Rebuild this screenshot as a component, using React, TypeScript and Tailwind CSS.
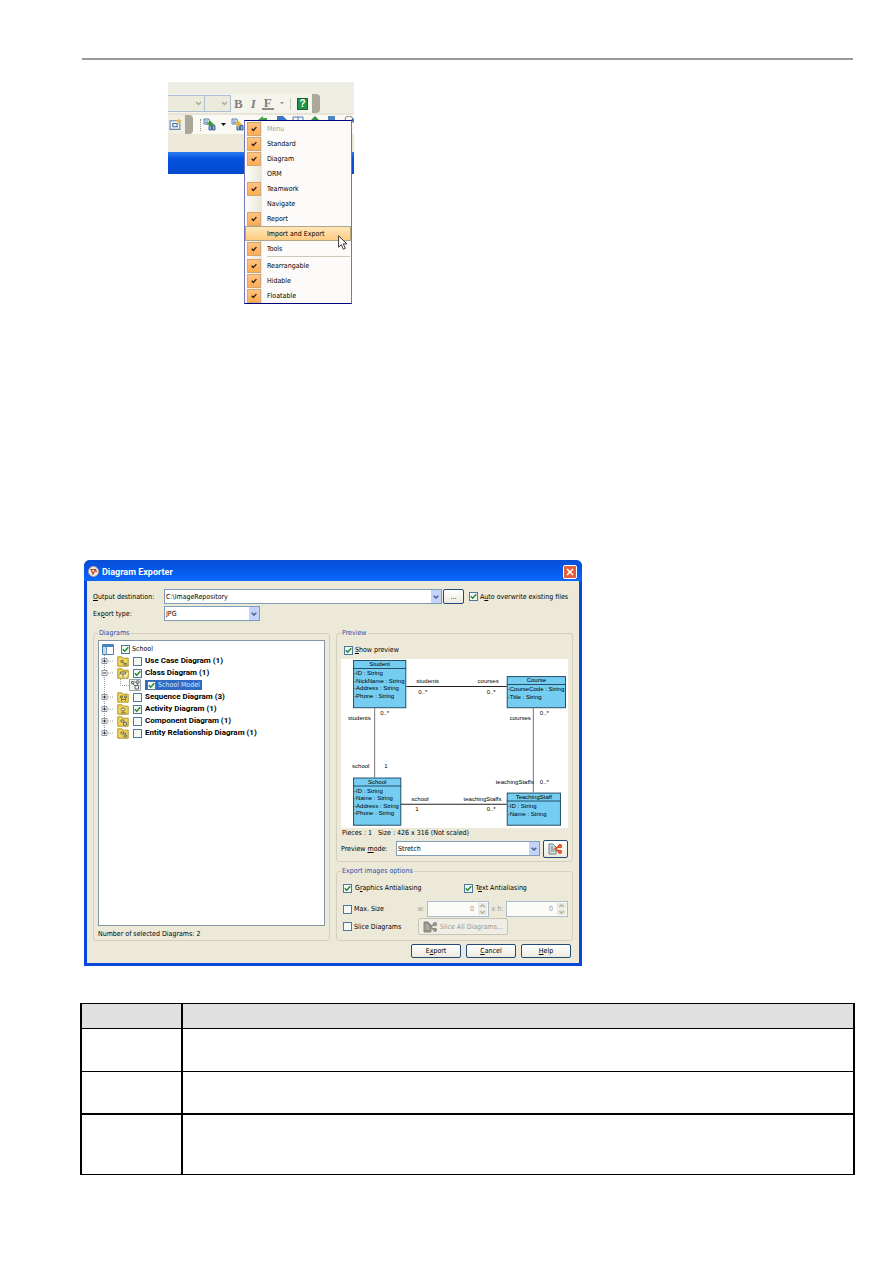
import React from "react";

const ui = "font-['DejaVu_Sans_Condensed','DejaVu_Sans',sans-serif] text-[7px] leading-[10px]";

function Tick({ className = "" }: { className?: string }) {
  return (
    <svg viewBox="0 0 7 7" className={className} fill="none" stroke="currentColor" strokeWidth="1.5">
      <path d="M.8 3.2 2.7 5.2 6.3 1.3" />
    </svg>
  );
}

function Check({ label, on = false, bold = false, selected = false, gap = "gap-0.5" }: {
  label: React.ReactNode; on?: boolean; bold?: boolean; selected?: boolean; gap?: string;
}) {
  return (
    <label className={`flex items-center whitespace-nowrap ${gap} ${bold ? "font-[Roboto,sans-serif] text-[8px] font-bold" : ""} ${selected ? "bg-[#316ac5] px-0.5 text-[#dce8fa]" : ""}`}>
      <span className="grid size-[9px] shrink-0">
        <input type="checkbox" defaultChecked={on} className="peer col-start-1 row-start-1 m-0 size-[9px] appearance-none border border-[#4a7a9c] bg-[#f6f8f6]" />
        <Tick className="pointer-events-none col-start-1 row-start-1 m-px size-[7px] text-[#218a35] opacity-0 peer-checked:opacity-100" />
      </span>
      <span>{label}</span>
    </label>
  );
}

function Combo({ id, value, className }: { id: string; value: string; className: string }) {
  return (
    <div className={`flex h-[15px] border border-[#7f9db9] bg-white ${className}`}>
      <div className="grid min-w-0 flex-1">
        <select id={id} className="col-start-1 row-start-1 w-full appearance-none bg-transparent pl-px pt-px leading-3 outline-none">
          <option>{value}</option>
        </select>
        <span className="pointer-events-none col-start-1 row-start-1 flex w-[10px] items-center justify-center justify-self-end bg-[#c3d3fb]">
          <svg viewBox="0 0 6 4" className="h-1 w-1.5" fill="none" stroke="#4d6185" strokeWidth="1.5">
            <path d="M.7.7 3 3 5.3.7" />
          </svg>
        </span>
      </div>
    </div>
  );
}

function Group({ title, className = "", children }: { title: string; className?: string; children: React.ReactNode }) {
  return (
    <fieldset className={`min-w-0 rounded-[3px] border border-[#d3d0bd] px-1 ${className}`}>
      <legend className="px-px leading-2 text-[#1c50a8]">{title}</legend>
      {children}
    </fieldset>
  );
}

function PushButton({ children }: { children: React.ReactNode }) {
  return (
    <button className="h-[14px] w-[50px] rounded-[2px] border border-[#244a78] bg-gradient-to-b from-white to-[#eceadf] leading-3">
      {children}
    </button>
  );
}

function Slicer({ muted = false }: { muted?: boolean }) {
  const a = muted ? "#8e8d84" : "#6f7f84";
  const b = muted ? "#8e8d84" : "#de4a20";
  return (
    <svg viewBox="0 0 15 12" className="h-3 w-[15px] shrink-0" fill="none">
      <path d="M1 1h4l3 3v7H1z" fill={muted ? a : "#dce4e2"} stroke={a} />
      <path d="M2.5 4h3M2.5 6h4M2.5 8h4" stroke={muted ? "#c9c6b8" : a} />
      <path d="m7 6 4-2.5M7 6l4 2.5" stroke={b} strokeWidth="1.8" />
      <circle cx="12" cy="3.2" r="1.3" stroke={b} strokeWidth="1.7" />
      <circle cx="12" cy="8.8" r="1.3" stroke={b} strokeWidth="1.7" />
    </svg>
  );
}

function Spin({ id }: { id: string }) {
  return (
    <div className="flex h-[16px] w-[62px] shrink-0 items-center border border-[#a9bccd] bg-[#fbfbf8] pr-px">
      <input id={id} defaultValue="0" disabled className="w-full min-w-0 flex-1 bg-transparent pr-1 text-right text-[#9b9a90]" />
      <svg viewBox="0 0 9 12" className="h-3 w-[9px] shrink-0" fill="none">
        <path d="M0 0h9v5.5H0zM0 6.5h9V12H0z" fill="#e8e7dc" />
        <path d="m2.5 3.8 2-2 2 2M2.5 8.2l2 2 2-2" stroke="#a9a99c" strokeWidth="1.2" />
      </svg>
    </div>
  );
}

const menu: [string, boolean][] = [
  ["Menu", true], ["Standard", true], ["Diagram", true], ["ORM", false], ["Teamwork", true], ["Navigate", false],
  ["Report", true], ["Import and Export", false], ["Tools", true], ["Rearrangable", true], ["Hidable", true], ["Floatable", true],
];

function PopupMenu() {
  return (
    <ul role="menu" className="absolute left-[76px] top-[38px] w-[108px] border-x border-y border-x-[#7673bd] border-y-[#00007c] bg-[#fcfbf9] bg-gradient-to-r from-[#fdfdfb] to-[#e9e6d5] bg-[length:17px_100%] bg-no-repeat">
      {menu.map(([name, on], i) => {
        const hot = name === "Import and Export";
        return (
          <React.Fragment key={name}>
            {i === 9 && <li role="separator" className="ml-[22px] mr-px h-0.5 border-t border-[#cbc8b8]" />}
            <li>
              <button
                role="menuitem"
                disabled={i === 0}
                className={`flex h-[15px] w-full items-center gap-[5px] pl-0.5 text-left ${i === 0 ? "text-[#a5a398]" : "text-black"} ${hot ? "bg-gradient-to-b from-[#ffe9bf] to-[#ffc97d] outline outline-1 -outline-offset-1 outline-[#b0a585]" : ""}`}
              >
                <span className={`flex h-[14px] w-[14px] items-center justify-center ${on ? "border border-[#d0a878] bg-gradient-to-b from-[#ffc283] to-[#ffac50]" : ""}`}>
                  {on && <Tick className="size-1.5 text-[#2a1c10]" />}
                </span>
                <span className="pl-px">{name}</span>
              </button>
            </li>
          </React.Fragment>
        );
      })}
    </ul>
  );
}

function Binoculars({ tint }: { tint: string }) {
  return (
    <svg viewBox="0 0 13 13" className="size-[13px] shrink-0" fill="none">
      <path d="M1 1h5l1 5H1z" fill="#dce9f4" stroke="#5483b0" />
      <path d="M2 3h3M2 4.5h3" stroke="#5483b0" strokeWidth=".7" />
      <path d="M6 7.5h2.5V12H6zM9.5 7.5H12V12H9.5z" fill="#8fb6da" stroke="#234f80" strokeWidth=".8" />
      <path d="m3.500 6.500 3.500-4 4.500 4.500H8.500v1.500H6V6.500z" fill={tint} />
    </svg>
  );
}

function DropArrow() {
  return (
    <svg viewBox="0 0 7 5" className="h-[5px] w-[7px]" fill="none" stroke="#aaa89c" strokeWidth="1.4">
      <path d="m1 1 2.5 2.5L6 1" />
    </svg>
  );
}

function ToolbarShot() {
  return (
    <section className={`relative ml-[88px] mt-[22px] h-[223px] w-[186px] ${ui}`}>
      <div className="overflow-hidden bg-[#ece9d8]">
        <div className="h-3 bg-[#efeee4]" />
        <div className="flex h-[19px] items-center bg-[#efeee4]">
          <div className="flex h-full w-[152px] items-center rounded-r-[4px] bg-[#f5f4ec]">
            <div className="flex h-[17px] w-[37px] items-center justify-end border border-l-0 border-[#a9bfd4] bg-[#eceada] pr-0.5"><DropArrow /></div>
            <div className="flex h-[17px] w-[26px] items-center justify-end border border-l-0 border-[#a9bfd4] bg-[#eceada] pr-0.5"><DropArrow /></div>
            <div className="flex flex-1 items-center justify-between pl-[3px] pr-1 font-['Liberation_Serif',serif] text-[13px] font-bold leading-4 text-[#828178]">
              <button>B</button>
              <button className="pl-0.5 italic">I</button>
              <button className="h-[13px] border-b-2 border-[#8c8b84] px-0.5 leading-3">F</button>
              <svg viewBox="0 0 4 3" className="h-[3px] w-1"><path d="M0 0h4L2 2.5z" fill="#999789" /></svg>
              <span className="h-3 w-px bg-[#d0cdbd]" />
              <button className="flex h-3 w-[11px] items-center justify-center border border-[#12662c] bg-[#239548] font-['Liberation_Sans',sans-serif] text-[10px] text-white">?</button>
            </div>
            <span className="h-full w-2 rounded-r-[4px] bg-[#aaa899]" />
          </div>
        </div>
        <div className="h-[2px] bg-[#e8e5d6]" />
        <div className="flex h-[19px] items-center bg-[#faf9f3]">
          <div className="flex h-full w-[25px] shrink-0 items-center rounded-r-[4px] bg-[#f0eee2]">
            <svg viewBox="0 0 12 12" className="mx-px size-[13px]" fill="none">
              <path d="M1 2.5h9v8H1z" fill="#eef4fa" stroke="#6888a8" />
              <path d="M3.5 5h4v3h-4z" stroke="#456f9e" />
              <path d="m9 0 .8 2 2.200.3-2 1.200L9 5.500 8 3.500 6 2.300 8.200 2z" fill="#f0b63c" />
            </svg>
            <span className="ml-auto h-full w-2 rounded-r-[4px] bg-[#aaa899]" />
          </div>
          <span className="ml-[7px] h-3 border-l border-dotted border-[#8c8a7c]" />
          <span className="ml-0.5"><Binoculars tint="#3a9a3a" /></span>
          <svg viewBox="0 0 5 3" className="mx-[5px] h-[3px] w-[5px] shrink-0"><path d="M0 0h5L2.500 3z" fill="#111" /></svg>
          <Binoculars tint="#e2b336" />
          <svg viewBox="0 0 110 12" className="ml-1 mt-px h-3 w-[110px] shrink-0 self-start" fill="none">
            <path d="m10 4 5-4v2h4v5h-4v2z" fill="#43a047" />
            <path d="M29 0h6l4 4H29z" fill="#3c78c8" />
            <path d="M45 1h10v4H45zM50 1v4" stroke="#4c7eb4" />
            <path d="m63 4 4-4 4 4z" fill="#37923d" />
            <path d="M80 0h7v5h-7z" fill="#4d86c4" />
            <circle cx="101" cy="4" r="4" stroke="#778899" />
            <path d="m104 3 3 3" stroke="#3569b8" strokeWidth="2" />
          </svg>
        </div>
        <div className="h-[18px] bg-[#ece9d8]" />
        <div className="h-[22px] bg-gradient-to-b from-[#2a7df0] via-[#0753df] via-30% to-[#0349cc]" />
      </div>
      <PopupMenu />
      <svg viewBox="0 0 10 15" className="absolute left-[170px] top-[153px] h-[15px] w-2.5">
        <path d="M.6.8v11.400l2.700-2.500 2 4.500 2-.9-2-4.400h3.600z" fill="white" stroke="#222" strokeWidth=".9" />
      </svg>
    </section>
  );
}

function Folder({ open, glyph }: { open: boolean; glyph: string }) {
  return (
    <svg viewBox="0 0 12 12" className="size-3 shrink-0" fill="none">
      <path d="M.8 1.800h4l1 1.400h5.400v8H.8z" fill="#f1d557" stroke="#b3962c" />
      {open && <path d="M1 11 3.500 5H12l-1.500 6z" fill="#fbe99a" stroke="#b3962c" strokeWidth=".7" />}
      <path d={glyph} stroke="#75704c" strokeWidth="1" fill="#e8e8dc" />
    </svg>
  );
}

const tree: { name: string; on: boolean; open?: boolean; glyph: string }[] = [
  { name: "Use Case Diagram (1)", on: false, glyph: "M4 5.500h2v2H4zM6 7l2 2M7 8.500h2.500V10H7z" },
  { name: "Class Diagram (1)", on: true, open: true, glyph: "M3.500 5h5v2h-5zM6 7v3" },
  { name: "Sequence Diagram (3)", on: false, glyph: "M3.500 5h2v1.500h-2zM7.500 5h2v1.500h-2zM4.500 7v3M8.500 7v3M4.500 8.500h4" },
  { name: "Activity Diagram (1)", on: true, glyph: "M4 6.500a2 1.500 0 1 0 4 0 2 1.500 0 1 0-4 0M6 8v2M4 10h5" },
  { name: "Component Diagram (1)", on: false, glyph: "M4 5h3v2H4zM6.500 7.500h3V10h-3z" },
  { name: "Entity Relationship Diagram (1)", on: false, glyph: "M4 5h2.500v2H4zM7 8h2.500v2H7zM6.500 6h2v2" },
];

function DiagramTree() {
  return (
    <ul className="flex-1 border border-[#8296a4] bg-white pl-0.5 pt-0.5">
      <li className="flex h-3 items-center gap-[7px] pl-px">
        <svg viewBox="0 0 12 11" className="h-[11px] w-3" fill="none">
          <path d="M.5.5h11v10H.5z" fill="white" stroke="#4b80a8" />
          <path d="M1 1h10v2H1z" fill="#3f86cf" />
          <path d="M1 3h3v7H1z" fill="#bfdcf2" /><path d="M4.500 3v7" stroke="#6b9dc2" />
        </svg>
        <Check label="School" on />
      </li>
      {tree.map((n, i) => (
        <React.Fragment key={n.name}>
          <li className="flex h-3 items-center">
            <svg viewBox="0 0 16 12" className="h-3 w-4 shrink-0" fill="none">
              <path d={i === tree.length - 1 ? "M3.500 0v6" : "M3.500 0v12"} stroke="#9a9a9a" strokeDasharray="1 1" />
              <path d="M7 6h5" stroke="#9a9a9a" strokeDasharray="1 1" />
              <path d="M1 3.500h5v5H1z" fill="white" stroke="#8a949c" />
              <path d={n.open ? "M2 6h3" : "M2 6h3M3.500 4.500v3"} stroke="#333" />
            </svg>
            <Folder open={!!n.open} glyph={n.glyph} />
            <span className="ml-1"><Check label={n.name} on={n.on} bold gap="gap-[3px]" /></span>
          </li>
          {n.open && (
            <li className="flex h-3 items-center">
              <svg viewBox="0 0 28 12" className="h-3 w-7 shrink-0" fill="none" stroke="#9a9a9a" strokeDasharray="1 1">
                <path d="M3.500 0v12M19.500 0v6.500h8" />
              </svg>
              <svg viewBox="0 0 12 12" className="mr-1 size-3 shrink-0" fill="none" stroke="#5e6a72">
                <path d="M.5.5h11v11H.5z" fill="#f1f2ee" stroke="#9aa2a5" />
                <path d="M2.500 2.500h2.500v2H2.500zM7 2h3v2H7zM6 6.500h3.500v3.500H6zM3.500 4.500 6 7M8.500 4v2.500" />
              </svg>
              <Check label="School Model" on selected />
            </li>
          )}
        </React.Fragment>
      ))}
    </ul>
  );
}

type Box = { x: number; y: number; w: number; h: number; name: string; rows: string[]; step: number };
const boxes: Box[] = [
  { x: 12, y: 1, w: 53, h: 48, name: "Student", rows: ["ID : String", "NickName : String", "Address : String", "Phone : String"], step: 7.5 },
  { x: 165, y: 17, w: 59, h: 32, name: "Course", rows: ["CourseCode : String", "Title : String"], step: 8 },
  { x: 12, y: 118, w: 48, h: 48, name: "School", rows: ["ID : String", "Name : String", "Address : String", "Phone : String"], step: 7.5 },
  { x: 165, y: 133, w: 54, h: 33, name: "TeachingStaff", rows: ["ID : String", "Name : String"], step: 8 },
];
const marks: [number, number, string][] = [
  [75, 24, "students"], [136, 24, "courses"], [77, 35, "0..*"], [145, 35, "0..*"], [39, 56, "0..*"], [7, 61, "students"],
  [198, 56, "0..*"], [168, 61, "courses"], [11, 109, "school"], [43, 109, "1"], [154, 124, "teachingStaffs"], [198, 124, "0..*"],
  [70, 141, "school"], [122, 141, "teachingStaffs"], [74, 151, "1"], [145, 151, "0..*"],
];

function ClassDiagram() {
  return (
    <svg viewBox="0 0 226 168" className="w-full bg-white font-['Liberation_Sans',sans-serif] text-[6px]" role="img" aria-label="Class diagram">
      <path d="M65 27.500H165M59 144.500H165" stroke="#222" fill="none" />
      <path d="M33.500 49V118M191.500 49V133" stroke="#777" fill="none" />
      {boxes.map((b) => (
        <g key={b.name}>
          <rect x={b.x + 0.5} y={b.y + 0.5} width={b.w - 1} height={b.h - 1} fill="#76cdf2" stroke="#24506a" />
          <path d={`M${b.x} ${b.y + 8.5}h${b.w}`} stroke="#24506a" />
          <text x={b.x + b.w / 2} y={b.y + 6} textAnchor="middle">{b.name}</text>
          {b.rows.map((r, i) => (
            <text key={r} x={b.x + 1} y={b.y + 15 + i * b.step}>-{r}</text>
          ))}
        </g>
      ))}
      {marks.map(([x, y, t], i) => <text key={i} x={x} y={y}>{t}</text>)}
    </svg>
  );
}

function Exporter() {
  return (
    <section className={`ml-1 mt-[255px] w-full max-w-[498px] rounded-t-[6px] bg-[#0a48dc] px-[3px] pb-[3px] text-black ${ui}`}>
      <header className="-mx-[3px] flex h-[21px] items-center gap-[3px] rounded-t-[6px] bg-gradient-to-b from-[#0a4fd6] via-[#0558e8] to-[#0a68fb] pl-1 pr-[5px] pt-0.5">
        <svg viewBox="0 0 11 11" className="size-[11px]" fill="none">
          <circle cx="5.500" cy="5.500" r="5" fill="#f3e6df" stroke="#b9a49c" />
          <path d="M3 3.500h4.500L5 8zM7 3l1.500 3" stroke="#b4442a" strokeWidth="1.2" />
        </svg>
        <h1 className="flex-1 font-[Roboto,sans-serif] text-[9px] font-bold text-white">Diagram Exporter</h1>
        <button aria-label="Close" className="flex size-[14px] items-center justify-center rounded-[2px] border border-white bg-[#e2603c]">
          <svg viewBox="0 0 8 8" className="size-2" stroke="white" strokeWidth="1.5"><path d="m1 1 6 6M7 1 1 7" /></svg>
        </button>
      </header>
      <div className="bg-[#ece9d8] pb-[5px] pl-1.5 pr-1.5 pt-2">
        <div className="flex items-center">
          <label htmlFor="dest" className="w-[71px]"><u>O</u>utput destination:</label>
          <Combo id="dest" value="C:\ImageRepository" className="min-w-0 flex-1" />
          <button aria-label="Browse" className="ml-px mr-[5px] h-[15px] w-[21px] rounded-[2px] border border-[#244a78] bg-gradient-to-b from-white to-[#eceadf] leading-3">...</button>
          <span className="w-[104px]"><Check on label={<>A<u>u</u>to overwrite existing files</>} /></span>
        </div>
        <div className="mt-0.5 flex items-center">
          <label htmlFor="type" className="w-[71px]">Ex<u>p</u>ort type:</label>
          <Combo id="type" value="JPG" className="w-[96px]" />
        </div>
        <div className="mt-2 grid grid-cols-2 gap-1.5">
          <Group title="Diagrams" className="flex flex-col">
            <div className="flex h-[303px] flex-col">
              <div className="h-[3px]" />
              <DiagramTree />
              <p className="pt-0.5 leading-3">Number of selected Diagrams: 2</p>
            </div>
          </Group>
          <div className="flex min-w-0 flex-col justify-between">
            <Group title="Preview">
              <div className="px-[3px] pb-1 pt-2"><Check on label={<><u>S</u>how preview</>} /></div>
              <ClassDiagram />
              <p className="whitespace-pre pl-px">Pieces : 1   Size : 426 x 316 (Not scaled)</p>
              <div className="mb-[3px] mt-0.5 flex items-center">
                <label htmlFor="mode" className="w-[55px] whitespace-nowrap">Preview <u>m</u>ode:</label>
                <Combo id="mode" value="Stretch" className="min-w-0 flex-1" />
                <button aria-label="Slice preview" className="ml-[3px] flex h-[18px] w-[25px] items-center justify-center rounded-[2px] border border-[#244a78] bg-gradient-to-b from-white to-[#eceadf]"><Slicer /></button>
              </div>
            </Group>
            <Group title="Export images options">
              <div className="flex flex-col pb-[5px] pl-0.5 pt-2">
                <div className="grid grid-cols-2">
                  <Check on gap="gap-[3px]" label={<>G<u>r</u>aphics Antialiasing</>} />
                  <span className="ml-2"><Check on gap="gap-[3px]" label={<>T<u>e</u>xt Antialiasing</>} /></span>
                </div>
                <div className="mt-2 flex items-center justify-between">
                  <span className="w-[72px]"><Check label="Max. Size" /></span>
                  <label htmlFor="w" className="text-[#9b9a90]">w:</label>
                  <Spin id="w" />
                  <label htmlFor="h" className="whitespace-nowrap text-[#9b9a90]">x h:</label>
                  <Spin id="h" />
                </div>
                <div className="mt-px flex items-center">
                  <span className="w-[75px]"><Check label="Slice Diagrams" /></span>
                  <button disabled className="flex h-[17px] w-[90px] items-center gap-0.5 whitespace-nowrap rounded-[2px] border border-[#c8c5b6] bg-[#f0eee4] pl-1 text-[#9b9a90]"><Slicer muted />Slice All Diagrams...</button>
                </div>
              </div>
            </Group>
          </div>
        </div>
        <div className="mt-[3px] flex justify-end gap-[5px] pr-0.5">
          <PushButton>E<u>x</u>port</PushButton>
          <PushButton><u>C</u>ancel</PushButton>
          <PushButton><u>H</u>elp</PushButton>
        </div>
      </div>
    </section>
  );
}

export default function App() {
  return (
    <main className="min-h-screen bg-white pb-[88px] pl-20 pr-[38px] pt-[58px]">
      <hr className="mx-0.5 h-0.5 border-0 bg-[#999]" />
      <ToolbarShot />
      <Exporter />
      <table className="mt-[37px] w-full table-fixed border-separate border-spacing-0 border-l-2 border-t border-black">
        <thead>
          <tr className="h-[25px] bg-[#e0e0e0]">
            <th className="w-[101px] border-b border-r-2 border-black" />
            <th className="border-b border-r-2 border-black" />
          </tr>
        </thead>
        <tbody>
          <tr className="h-[43px]"><td className="border-b border-r-2 border-black" /><td className="border-b border-r-2 border-black" /></tr>
          <tr className="h-[43px]"><td className="border-b-2 border-r-2 border-black" /><td className="border-b-2 border-r-2 border-black" /></tr>
          <tr className="h-[60px]"><td className="border-b border-r-2 border-black" /><td className="border-b border-r-2 border-black" /></tr>
        </tbody>
      </table>
    </main>
  );
}
